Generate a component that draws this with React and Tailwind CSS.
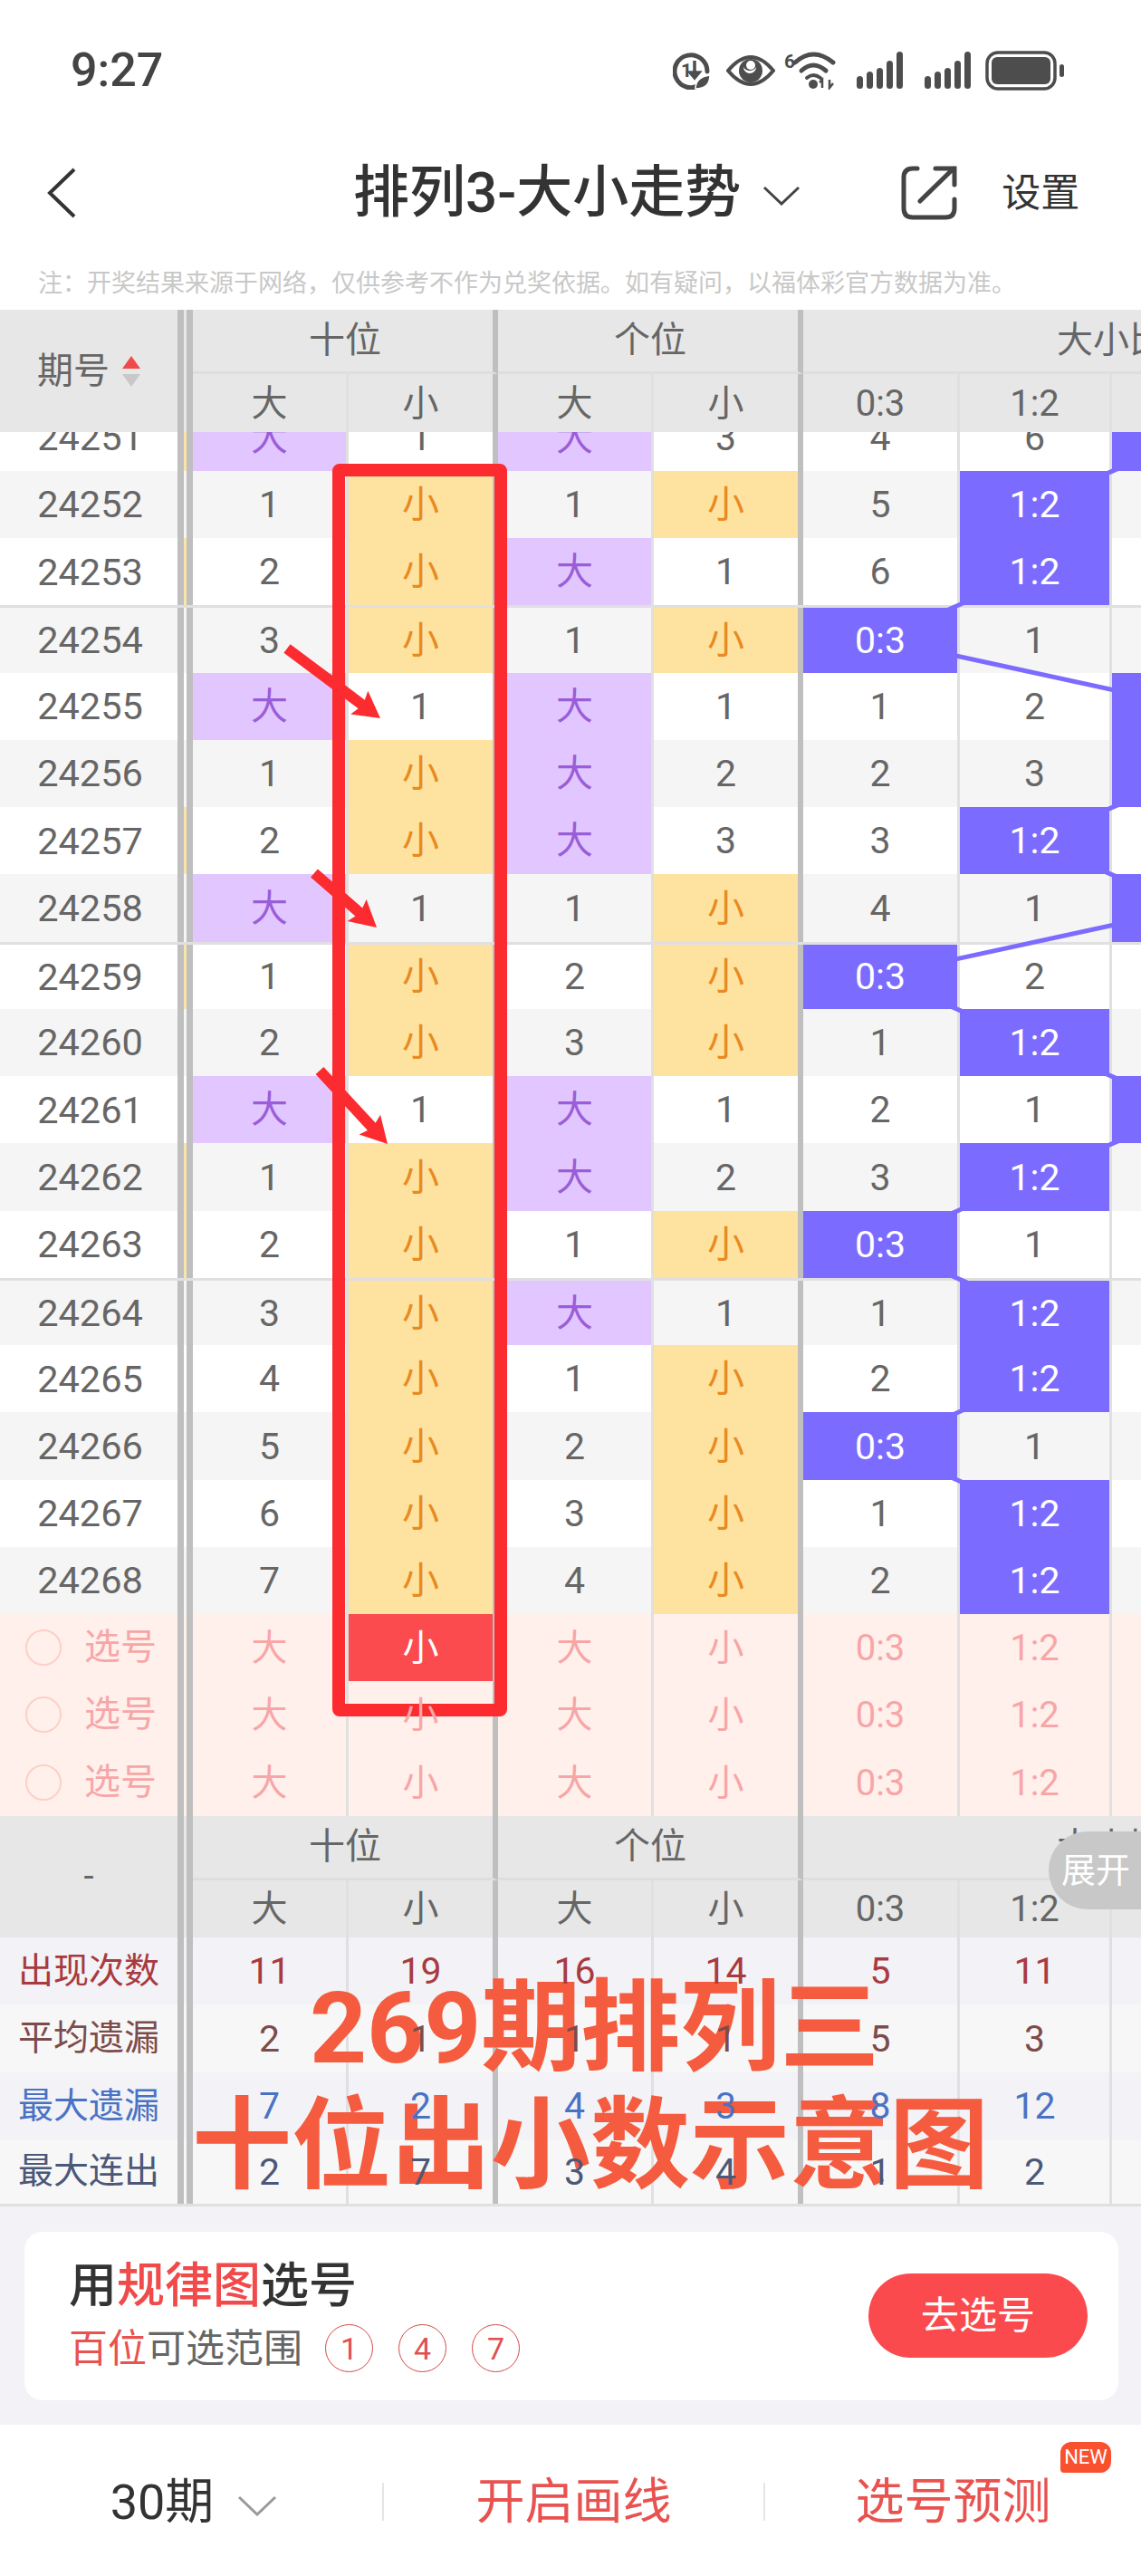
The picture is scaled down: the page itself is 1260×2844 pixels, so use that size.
import React from 'react';

const gridCols = 'grid grid-cols-[196px_17px_172px_165px_172px_165px_173px_168px_32px]';

// borders between the columns, same order as the value cells
const edges = [
  'border-r-[3px] border-[#e0e0e0]',
  'border-r-[6px] border-[#bfbfbf]',
  'border-r-[3px] border-[#e0e0e0]',
  'border-r-[6px] border-[#bfbfbf]',
  'border-r-[3px] border-[#e0e0e0]',
  'border-r-[3px] border-[#e0e0e0]',
];

// period, ten big, ten small, one big, one small, 0:3, 1:2, highlighted ratio column
const rows = [
  ['24251', '大', '1', '大', '3', '4', '6', 2],
  ['24252', '1', '小', '1', '小', '5', '1:2', 1],
  ['24253', '2', '小', '大', '1', '6', '1:2', 1],
  ['24254', '3', '小', '1', '小', '0:3', '1', 0],
  ['24255', '大', '1', '大', '1', '1', '2', 2],
  ['24256', '1', '小', '大', '2', '2', '3', 2],
  ['24257', '2', '小', '大', '3', '3', '1:2', 1],
  ['24258', '大', '1', '1', '小', '4', '1', 2],
  ['24259', '1', '小', '2', '小', '0:3', '2', 0],
  ['24260', '2', '小', '3', '小', '1', '1:2', 1],
  ['24261', '大', '1', '大', '1', '2', '1', 2],
  ['24262', '1', '小', '大', '2', '3', '1:2', 1],
  ['24263', '2', '小', '1', '小', '0:3', '1', 0],
  ['24264', '3', '小', '大', '1', '1', '1:2', 1],
  ['24265', '4', '小', '1', '小', '2', '1:2', 1],
  ['24266', '5', '小', '2', '小', '0:3', '1', 0],
  ['24267', '6', '小', '3', '小', '1', '1:2', 1],
  ['24268', '7', '小', '4', '小', '2', '1:2', 1],
];

const yellowGap = ['24251', '24253', '24257', '24259', '24262', '24263'];
const groupStart = ['24254', '24259', '24264'];

const note = '注\uFF1A开奖结果来源于网络\uFF0C仅供参考不作为兑奖依据。如有疑问\uFF0C以福体彩官方数据为准。';

const stats = [
  { label: '出现次数', values: ['11', '19', '16', '14', '5', '11'], color: 'text-[#a83a40]', bg: 'bg-[#f2f2f7]', h: 'h-[74px]' },
  { label: '平均遗漏', values: ['2', '1', '1', '1', '5', '3'], color: 'text-[#7d4b4b]', bg: 'bg-[#f7f7f7]', h: 'h-[75px]' },
  { label: '最大遗漏', values: ['7', '2', '4', '3', '8', '12'], color: 'text-[#4a72c4]', bg: 'bg-[#f2f2f7]', h: 'h-[74px]' },
  { label: '最大连出', values: ['2', '7', '3', '4', '1', '2'], color: 'text-[#4b5878]', bg: 'bg-[#f7f7f7]', h: 'h-[71px]' },
];

const Sep = ({ gap }) => (
  <div className="flex h-full">
    <div className="w-[7px] bg-[#bfbfbf]" />
    <div className={`w-[3px] ${gap || ''}`} />
    <div className="w-[7px] bg-[#bfbfbf]" />
  </div>
);

const Cell = ({ edge, className, children }) => (
  <div className={`flex items-center justify-center ${edge} ${className || ''}`}>
    <span className="relative z-10 top-[1px]">{children}</span>
  </div>
);

const HeaderBlock = ({ rowsClass, left }) => (
  <div className={`${gridCols} ${rowsClass} bg-[#e7e7e7] text-[40px] text-[#666] overflow-hidden`}>
    <div className="row-span-2 flex items-center justify-center">{left}</div>
    <div className="row-span-2"><Sep /></div>
    <div className="col-span-2 flex items-center justify-center pl-[5px] border-b-[3px] border-r-[6px] border-b-[#dedede] border-r-[#bfbfbf]">十位</div>
    <div className="col-span-2 flex items-center justify-center pl-[5px] border-b-[3px] border-r-[6px] border-b-[#dedede] border-r-[#bfbfbf]">个位</div>
    <div className="col-span-3 flex items-center pl-[280px] border-b-[3px] border-[#dedede] whitespace-nowrap overflow-hidden">大小比</div>
    {['大', '小', '大', '小', '0:3', '1:2'].map((t, i) => (
      <Cell key={i} edge={edges[i]}>{t}</Cell>
    ))}
    <div />
  </div>
);

const DataRow = ({ row }) => {
  const [period, ...rest] = row;
  const values = rest.slice(0, 6);
  const hl = rest[6];
  const even = Number(period) % 2 === 0;
  const bg = even ? 'bg-[#f5f5f5]' : 'bg-white';
  const group = groupStart.includes(period);
  return (
    <div className={`${gridCols} h-[74.25px] ${bg} ${group ? 'border-t-[3px] border-[#e0e0e0]' : ''} text-[41px] text-[#666]`}>
      <div className="flex items-center justify-center pt-[1px] pl-[3px] text-[41.5px]">{period}</div>
      <Sep gap={yellowGap.includes(period) ? 'bg-[#fbe3aa]' : ''} />
      {values.map((v, i) => {
        let style = '';
        if (v === '大') style = 'bg-[#e2c6ff] text-[#9a5dd8]';
        if (v === '小') style = 'bg-[#fee2a0] text-[#e88a1f]';
        if (i >= 4 && hl === i - 4) style = 'bg-[#7b6cff] text-white';
        return <Cell key={i} edge={edges[i]} className={style}>{v}</Cell>;
      })}
      <div className={hl === 2 ? 'bg-[#7b6cff]' : ''} />
    </div>
  );
};

const SelectRow = ({ active }) => (
  <div className={`${gridCols} h-[74.33px] bg-[#fff0eb] text-[40px] text-[#f7a6a8]`}>
    <div className="flex items-center pl-[28px] gap-[25px]">
      <div className="w-[40px] h-[40px] rounded-full border-2 border-[#fcd0c6]" />
      <span>选号</span>
    </div>
    <Sep />
    {['大', '小', '大', '小', '0:3', '1:2'].map((t, i) => (
      <Cell key={i} edge={edges[i]} className={active && i === 1 ? 'bg-[#fb4b4f] text-white' : ''}>{t}</Cell>
    ))}
    <div />
  </div>
);

const StatRow = ({ stat }) => (
  <div className={`${gridCols} ${stat.h} ${stat.bg} ${stat.color} text-[41px]`}>
    <div className="flex items-center justify-center text-[39px]">{stat.label}</div>
    <Sep />
    {stat.values.map((v, i) => (
      <Cell key={i} edge={edges[i]}>{v}</Cell>
    ))}
    <div />
  </div>
);

const Signal = ({ className }) => (
  <svg width="52" height="42" viewBox="0 0 52 42" className={className}>
    <rect x="0" y="27" width="7" height="14" rx="3.5" fill="#4d4d4d" />
    <rect x="11" y="22" width="7" height="19" rx="3.5" fill="#4d4d4d" />
    <rect x="22" y="18" width="7" height="23" rx="3.5" fill="#4d4d4d" />
    <rect x="33" y="10" width="7" height="31" rx="3.5" fill="#4d4d4d" />
    <rect x="44" y="0" width="7" height="41" rx="3.5" fill="#4d4d4d" />
  </svg>
);

const StatusIcons = () => (
  <div className="flex items-center h-[44px] ml-auto">
    <svg width="42" height="42" viewBox="0 0 42 42">
      <path d="M31 36 A18 18 0 1 1 38 22" fill="none" stroke="#4d4d4d" strokeWidth="5" strokeLinecap="round" />
      <text x="9" y="28" fontSize="21" fontWeight="700" fill="#4d4d4d" fontFamily="Roboto">1</text>
      <path d="M24 10 V28 M24 29 L19 23 H29 Z" stroke="#4d4d4d" strokeWidth="3.5" fill="#4d4d4d" />
      <path d="M25 41 Q25 28 41 26 Q41 41 25 41 Z" fill="#4d4d4d" stroke="#fff" strokeWidth="1.5" />
    </svg>
    <svg width="54" height="36" viewBox="0 0 54 36" className="ml-[17px]">
      <path d="M2 18 Q27 -12 52 18 Q27 48 2 18 Z" fill="none" stroke="#4d4d4d" strokeWidth="4" />
      <circle cx="27" cy="18" r="13" fill="#4d4d4d" />
      <path d="M19 14 A8 8 0 0 0 33 14 A6 6 0 0 1 19 14 Z" fill="#fff" />
      <circle cx="27" cy="12" r="5" fill="#fff" />
    </svg>
    <svg width="58" height="42" viewBox="0 0 58 42" className="ml-[10px]">
      <text x="0" y="18" fontSize="21" fontWeight="700" fill="#4d4d4d" fontFamily="Roboto">6</text>
      <path d="M12 12 Q32 -6 54 12" fill="none" stroke="#4d4d4d" strokeWidth="5" strokeLinecap="round" />
      <path d="M19 21 Q32 9 46 21" fill="none" stroke="#4d4d4d" strokeWidth="5" strokeLinecap="round" />
      <path d="M25 29 Q32 23 40 29" fill="none" stroke="#4d4d4d" strokeWidth="4" strokeLinecap="round" />
      <circle cx="32" cy="36" r="5" fill="#4d4d4d" />
      <path d="M42 40 V31 L39 34 M50 31 V40 L54 35" fill="none" stroke="#4d4d4d" strokeWidth="2.5" />
    </svg>
    <Signal className="ml-[22px]" />
    <Signal className="ml-[23px]" />
    <svg width="88" height="44" viewBox="0 0 88 44" className="ml-[15px]">
      <rect x="2" y="2" width="75" height="40" rx="12" fill="none" stroke="#4d4d4d" strokeWidth="3.5" />
      <rect x="7" y="7" width="65" height="30" rx="6" fill="#4d4d4d" />
      <rect x="82" y="15" width="5" height="14" rx="2.5" fill="#4d4d4d" />
    </svg>
  </div>
);

// red hand-drawn marker arrow, from tail to tip
const Arrow = ({ x1, y1, x2, y2 }) => {
  const len = Math.hypot(x2 - x1, y2 - y1);
  const ux = (x2 - x1) / len;
  const uy = (y2 - y1) / len;
  const px = -uy;
  const py = ux;
  const baseX = x2 - ux * 26;
  const baseY = y2 - uy * 26;
  const sw = 6;
  const hw = 16;
  const pts = [
    [x1 + px * sw, y1 + py * sw],
    [baseX + px * sw, baseY + py * sw],
    [baseX + px * hw - ux * 3, baseY + py * hw - uy * 3],
    [x2, y2],
    [baseX - px * hw - ux * 3, baseY - py * hw - uy * 3],
    [baseX - px * sw, baseY - py * sw],
    [x1 - px * sw, y1 - py * sw],
  ];
  return <polygon points={pts.map((p) => p.join(',')).join(' ')} fill="#fb2b30" />;
};

const App = () => {
  const line = rows
    .map((r, k) => `${[972, 1142, 1314][r[7]]},${37.1 + 74.25 * k}`)
    .join(' ');

  return (
    <div className="relative w-[1260px] h-[2844px] overflow-hidden bg-white font-['Roboto','Noto_Sans_CJK_SC',sans-serif]">
      {/* status bar */}
      <div className="flex items-start h-[140px] pt-[56px] pl-[78px] pr-[84px]">
        <div className="text-[52px] leading-[44px] font-medium text-[#444]">9:27</div>
        <StatusIcons />
      </div>

      {/* nav */}
      <div className="flex items-center h-[140px] pt-[6px] pl-[52px] text-[#333]">
        <svg width="32" height="56" viewBox="0 0 32 56">
          <path d="M30 2 L3 28 L30 54" fill="none" stroke="#333" strokeWidth="4" />
        </svg>
        <div className="ml-[306px] text-[62px] leading-none font-medium whitespace-nowrap">排列3-大小走势</div>
        <svg width="42" height="22" viewBox="0 0 42 22" className="ml-[24px] mt-[6px]">
          <path d="M2 2 L21 20 L40 2" fill="none" stroke="#444" strokeWidth="3" />
        </svg>
        <svg width="62" height="62" viewBox="0 0 62 62" className="ml-[111px]">
          <path d="M18 4 H13 Q3 4 3 14 V48 Q3 58 13 58 H49 Q59 58 59 48 V38" fill="none" stroke="#444" strokeWidth="5" strokeLinecap="round" />
          <path d="M21 40 L58 4 M38 4 H59 V22" fill="none" stroke="#444" strokeWidth="5" strokeLinecap="round" />
        </svg>
        <div className="ml-[49px] text-[43px] leading-none">设置</div>
      </div>

      {/* note */}
      <div className="flex items-center h-[62px] pl-[42px] pt-[4px] text-[27px] text-[#c8c8c8] whitespace-nowrap">
        {note}
      </div>

      <HeaderBlock
        rowsClass="grid-rows-[71px_64px]"
        left={
          <div className="flex items-center gap-[14px]">
            <span>期号</span>
            <svg width="20" height="34" viewBox="0 0 20 34">
              <path d="M10 0 L20 14 H0 Z" fill="#f04a4a" />
              <path d="M10 34 L20 20 H0 Z" fill="#c8c8c8" />
            </svg>
          </div>
        }
      />

      {/* scrolled rows, the first one sits half under the header */}
      <div className="relative h-[1305px] overflow-hidden">
        <div className="relative -mt-[31.5px]">
          {rows.map((r) => (
            <DataRow key={r[0]} row={r} />
          ))}
          <svg width="1260" height="1337" viewBox="0 0 1260 1337" className="absolute left-0 top-0 z-0">
            <polyline points={line} fill="none" stroke="#7b6cff" strokeWidth="5" />
          </svg>
        </div>
      </div>

      <SelectRow active />
      <SelectRow />
      <SelectRow />

      <HeaderBlock rowsClass="grid-rows-[71px_63px]" left={<span>-</span>} />

      {stats.map((s) => (
        <StatRow key={s.label} stat={s} />
      ))}
      <div className="h-[3px] bg-[#e0e0e0]" />

      {/* bottom card */}
      <div className="h-[241px] bg-[#f2f2f7] pt-[28px] pl-[27px] pr-[25px]">
        <div className="flex items-center justify-between h-[186px] rounded-[20px] bg-white pl-[49px] pr-[34px]">
          <div>
            <div className="text-[53px] leading-[60px] font-medium text-[#333]">
              用<span className="text-[#f04a4a]">规律图</span>选号
            </div>
            <div className="flex items-center mt-[12px] text-[43px] leading-[54px] text-[#666]">
              <span className="text-[#e8524f]">百位</span>可选范围
              <div className="flex gap-[28px] ml-[25px]">
                {['1', '4', '7'].map((n) => (
                  <div key={n} className="flex items-center justify-center w-[53px] h-[53px] rounded-full border-[1.5px] border-[#d04a48] text-[34px] text-[#e0504f]">
                    {n}
                  </div>
                ))}
              </div>
            </div>
          </div>
          <div className="flex items-center justify-center w-[242px] h-[93px] rounded-full bg-[#fb4a4e] text-[42px] text-white">去选号</div>
        </div>
      </div>

      {/* bottom bar */}
      <div className="grid grid-cols-[424px_421px_415px] h-[167px] items-center pt-[4px] bg-white text-[54px]">
        <div className="flex items-center justify-center h-[42px] pl-[6px] border-r-[2px] border-[#e5e5e5] text-[#333]">
          <span>30期</span>
          <svg width="44" height="23" viewBox="0 0 44 23" className="ml-[26px] mt-[8px]">
            <path d="M2 2 L22 21 L42 2" fill="none" stroke="#999" strokeWidth="3" />
          </svg>
        </div>
        <div className="flex items-center justify-center h-[42px] border-r-[2px] border-[#e5e5e5] text-[#e8524f]">开启画线</div>
        <div className="flex items-center justify-center h-[42px] text-[#e8524f]">选号预测</div>
      </div>

      {/* things lying over the table */}
      <div className="absolute left-[1171px] top-[2696px] flex items-center justify-center w-[56px] h-[34px] rounded-t-[12px] rounded-br-[12px] rounded-bl-[4px] bg-[#f9502f] text-[22px] leading-none text-white">NEW</div>
      <div className="absolute left-[1158px] top-[2022px] flex items-center pl-[14px] w-[102px] h-[86px] rounded-l-[43px] bg-[#c8c8c8] text-[38px] text-white whitespace-nowrap">展开</div>
      <div className="absolute left-[367px] top-[512px] w-[193px] h-[1383px] rounded-[8px] border-[14px] border-[#fb2b30]" />
      <svg width="1260" height="2844" viewBox="0 0 1260 2844" className="absolute left-0 top-0">
        <Arrow x1={317} y1={716} x2={420} y2={793} />
        <Arrow x1={347} y1={964} x2={416} y2={1024} />
        <Arrow x1={353} y1={1182} x2={428} y2={1263} />
      </svg>
      <div className="absolute left-[342px] top-[2175px] text-[110px] leading-[130px] font-bold text-[#f55b3e] whitespace-nowrap">269期排列三</div>
      <div className="absolute left-[212px] top-[2305px] text-[110px] leading-[130px] font-bold text-[#f55b3e] whitespace-nowrap">十位出小数示意图</div>
    </div>
  );
};

export default App;
